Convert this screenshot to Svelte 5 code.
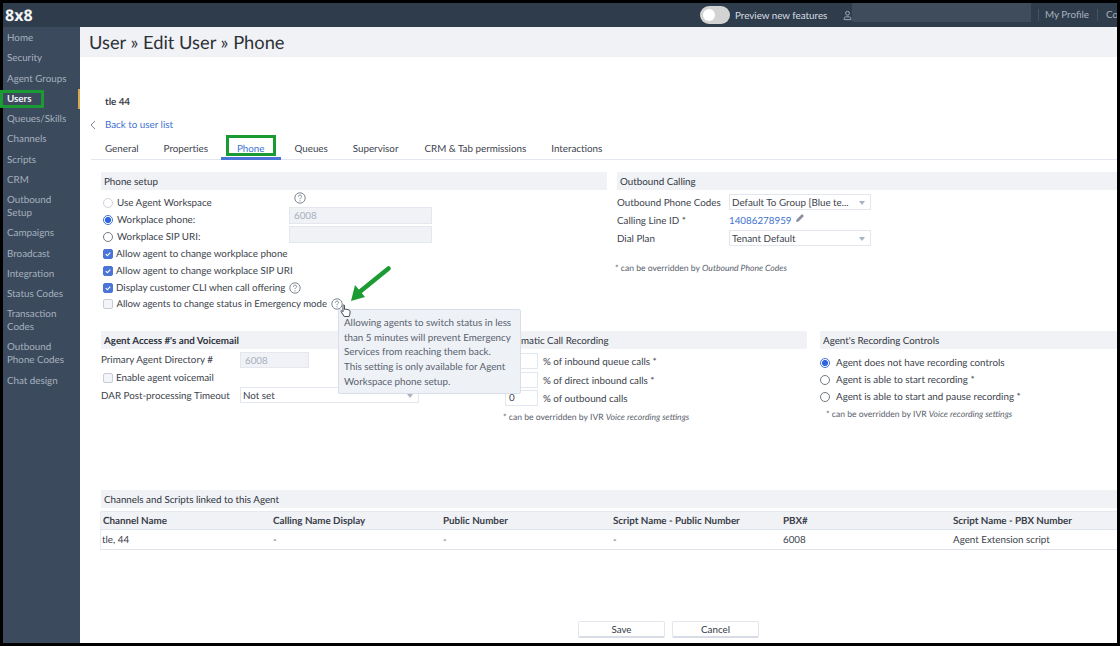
<script>
  const nav = [
    ['Home'], ['Security'], ['Agent Groups'], ['Users', true], ['Queues/Skills'], ['Channels'], ['Scripts'], ['CRM'],
    ['Outbound\nSetup'], ['Campaigns'], ['Broadcast'], ['Integration'], ['Status Codes'], ['Transaction\nCodes'],
    ['Outbound\nPhone Codes'], ['Chat design']
  ];
  const tabs = ['General', 'Properties', 'Phone', 'Queues', 'Supervisor', 'CRM & Tab permissions', 'Interactions'];
  const heads = ['Channel Name', 'Calling Name Display', 'Public Number', 'Script Name - Public Number', 'PBX#', 'Script Name - PBX Number'];
  const cells = ['tle, 44', '-', '-', '-', '6008', 'Agent Extension script'];
</script>

{#snippet help(cls)}
  <svg class="help {cls}" viewBox="0 0 12 12" aria-hidden="true">
    <circle cx="6" cy="6" r="5.2" fill="none" stroke="#7d8794" stroke-width="1"/>
    <path d="M4.4 4.7c0-1 .7-1.6 1.6-1.6s1.6.6 1.6 1.4c0 1.2-1.6 1.3-1.6 2.6" fill="none" stroke="#7d8794" stroke-width="1"/>
    <circle cx="6" cy="8.8" r=".65" fill="#7d8794"/>
  </svg>
{/snippet}

{#snippet check()}
  <span class="box on">
    <svg viewBox="0 0 10 10" aria-hidden="true"><path d="M2.2 5.2l2 2 3.6-4" fill="none" stroke="#fff" stroke-width="1.4"/></svg>
  </span>
{/snippet}

<div class="frame">
  <header class="top">
    <div class="logo">8x8</div>
    <div class="toggle"><span class="knob"></span></div>
    <span class="preview">Preview new features</span>
    <svg class="usericon" viewBox="0 0 12 14" aria-hidden="true">
      <circle cx="6" cy="4" r="2.6" fill="none" stroke="#c3cad3" stroke-width="1"/>
      <path d="M1.5 12.5v-1.5c0-1.4 1-2.2 2.2-2.2h4.6c1.2 0 2.2.8 2.2 2.2v1.5z" fill="none" stroke="#c3cad3" stroke-width="1"/>
    </svg>
    <div class="blur"></div>
    <a class="toplink first">My Profile</a>
    <a class="toplink">Co</a>
  </header>

  <div class="columns">
    <nav class="side">
      {#each nav as [label, active]}
        <div class="item" class:active>{label}</div>
      {/each}
    </nav>

    <main class="main">
      <h1 class="title">User » Edit User » Phone</h1>
      <div class="body">
        <div class="name">tle 44</div>
        <div class="back">
          <svg viewBox="0 0 6 10" aria-hidden="true"><path d="M5 1L1 5l4 4" fill="none" stroke="#7d8794" stroke-width="1"/></svg>
          <a>Back to user list</a>
        </div>
        <div class="tabs">
          {#each tabs as t}
            <div class="tab" class:current={t === 'Phone'}>{t}</div>
          {/each}
        </div>

        <div class="sections one">
          <section class="phone">
            <h2>Phone setup</h2>
            <div class="split">
              <div class="radios">
                <label class="row"><span class="radio off"></span>Use Agent Workspace</label>
                <label class="row"><span class="radio sel"></span>Workplace phone:</label>
                <label class="row"><span class="radio"></span>Workplace SIP URI:</label>
              </div>
              <div class="fields">
                {@render help('h1')}
                <div class="input dis">6008</div>
                <div class="input dis second"></div>
              </div>
            </div>
            <label class="row chk">{@render check()}Allow agent to change workplace phone</label>
            <label class="row chk">{@render check()}Allow agent to change workplace SIP URI</label>
            <label class="row chk">{@render check()}Display customer CLI when call offering {@render help('h2')}</label>
            <label class="row chk em"><span class="box"></span>Allow agents to change status in Emergency mode {@render help('h3')}</label>
          </section>
          <section class="outbound">
            <h2>Outbound Calling</h2>
            <div class="orow first"><span class="olabel">Outbound Phone Codes</span><div class="select w142">Default To Group [Blue te...<i></i></div></div>
            <div class="orow cli"><span class="olabel">Calling Line ID *</span><a>14086278959</a>
              <svg class="pencil" viewBox="0 0 10 10" aria-hidden="true"><path d="M1 9l.6-2.6L7 1l2 2-5.4 5.4z" fill="#8a929d"/></svg>
            </div>
            <div class="orow"><span class="olabel">Dial Plan</span><div class="select w142">Tenant Default<i></i></div></div>
            <p class="note onote">* can be overridden by <em>Outbound Phone Codes</em></p>
          </section>
        </div>

        <div class="sections two">
          <section class="access">
            <h2 class="strong">Agent Access #'s and Voicemail</h2>
            <div class="arow first"><span class="alabel">Primary Agent Directory #</span><div class="input dis w69">6008</div></div>
            <label class="row chk voice"><span class="box"></span>Enable agent voicemail</label>
            <div class="arow dar"><span class="alabel">DAR Post-processing Timeout</span><div class="select w179">Not set<i></i></div></div>
          </section>
          <section class="auto">
            <h2>Automatic Call Recording</h2>
            <div class="prow first"><div class="pct"></div>% of inbound queue calls *</div>
            <div class="prow"><div class="pct"></div>% of direct inbound calls *</div>
            <div class="prow"><div class="pct">0</div>% of outbound calls</div>
            <p class="note anote">* can be overridden by IVR <em>Voice recording settings</em></p>
          </section>
          <section class="controls">
            <h2>Agent's Recording Controls</h2>
            <label class="row rc first"><span class="radio sel"></span>Agent does not have recording controls</label>
            <label class="row rc"><span class="radio"></span>Agent is able to start recording *</label>
            <label class="row rc"><span class="radio"></span>Agent is able to start and pause recording *</label>
            <p class="note cnote">* can be overridden by IVR <em>Voice recording settings</em></p>
          </section>
        </div>

        <section class="linked">
          <h2>Channels and Scripts linked to this Agent</h2>
          <div class="table">
            <div class="tr th">{#each heads as h}<span>{h}</span>{/each}</div>
            <div class="tr td">{#each cells as c}<span>{c}</span>{/each}</div>
          </div>
        </section>

        <div class="actions">
          <button>Save</button>
          <button>Cancel</button>
        </div>
      </div>
    </main>
  </div>

  <div class="tip">Allowing agents to switch status in less<br/>than 5 minutes will prevent Emergency<br/>Services from reaching them back.<br/>This setting is only available for Agent<br/>Workspace phone setup.</div>
  <div class="mark users"></div>
  <div class="mark phonetab"></div>
  <svg class="arrow" viewBox="0 0 60 60" aria-hidden="true">
    <path d="M48.5 8.5L17 34" stroke="#1c9b33" stroke-width="4.6" stroke-linecap="round" fill="none"/>
    <path d="M11 41L15 25L25 37z" fill="#1c9b33"/>
  </svg>
  <svg class="hand" viewBox="0 0 12 15" aria-hidden="true">
    <path d="M3 1.5c0-.9 1.5-.9 1.5 0v4l1.2-.3 1.2.2 1.3.3 1.3.6c.6.4.6 1 .6 1.6 0 1.5-.3 3-1 4.6H4.2L1.2 7.8c-.5-.8.4-1.5 1.1-.9l.7.8z" fill="#fff" stroke="#333c48" stroke-width=".9" stroke-linejoin="round"/>
  </svg>
</div>

<style>
  :global(body) { margin: 0; background: #000; }
  .frame {
    position: relative; box-sizing: border-box; width: 1120px; height: 646px; padding: 3px; background: #000;
    display: flex; flex-direction: column; overflow: hidden; text-rendering: geometricPrecision;
    font-family: "Lato", "Noto Sans", sans-serif; font-size: 9.8px; color: #3c434d;
  }
  .top { height: 24px; flex: none; background: #2f3c4c; display: flex; align-items: center; overflow: hidden; }
  .logo { width: 695px; padding-left: 2px; box-sizing: border-box; flex: none; color: #f4f5f7; font: 700 16px/24px "Open Sans", sans-serif; }
  .toggle { width: 30px; height: 18px; border-radius: 9px; background: #d3d3d3; position: relative; margin-left: 2px; flex: none; }
  .knob { position: absolute; left: 3px; top: 3px; width: 12px; height: 12px; border-radius: 50%; background: #fff; }
  .preview { margin: 2px 0 0 5px; color: #d7dce2; width: 108px; flex: none; }
  .usericon { width: 9px; height: 13px; flex: none; }
  .blur { width: 179px; height: 19px; margin-top: -5px; background: #3f4c5c; flex: none; }
  .toplink { color: #aab3be; padding: 0 8px; height: 12px; line-height: 13px; border-left: 1px solid #45525f; flex: none; white-space: nowrap; }
  .toplink.first { margin-left: 7px; padding-left: 6px; width: 45px; padding-right: 7px; }
  .columns { flex: 1; display: flex; min-height: 0; }
  .side { width: 77px; flex: none; background: #3b4a5d; padding-top: 1px; box-sizing: border-box; }
  .item { padding: 4.2px 0 3.05px 4px; line-height: 13px; color: #a7b1bf; white-space: pre; }
  .item.active { color: #f0f2f5; font-weight: 700; box-shadow: inset -2px 0 #d9a94f; }
  .main { flex: 1; min-width: 0; background: #fff; display: flex; flex-direction: column; overflow: hidden; }
  .title { margin: 0; height: 30px; flex: none; background: #f1f2f6; padding-left: 9px; font: 400 18.3px/30px "Lato", sans-serif; color: #2c3138; }
  .body { padding-left: 21px; flex: 1; min-height: 0; display: flex; flex-direction: column; }
  .name { margin-top: 38px; padding-left: 4px; line-height: 14px; font-weight: 700; color: #3c434d; }
  .back { margin-top: 9px; margin-left: -11px; display: flex; align-items: center; line-height: 14px; gap: 9px; }
  .back svg { width: 6px; height: 10px; }
  .back a { color: #3f72d0; }
  .tabs { margin: 6px 0 0 -10px; display: flex; border-bottom: 1px solid #e2e6ee; height: 21px; padding-left: 14px; }
  .tab { position: relative; box-sizing: border-box; height: 21px; padding-top: 2px; line-height: 19px; color: #3c434d; }
  .tab:nth-child(1) { margin-right: 25px; }
  .tab:nth-child(2) { margin-right: 29px; }
  .tab:nth-child(3) { margin-right: 30px; }
  .tab:nth-child(4) { margin-right: 25px; }
  .tab:nth-child(5) { margin-right: 26px; }
  .tab:nth-child(6) { margin-right: 25px; }
  .tab.current { color: #3f72d0; }
  .tab.current::after { content: ""; position: absolute; left: -16px; right: -16px; bottom: -1px; height: 3px; background: #4a74d6; }
  .sections { display: flex; flex: none; }
  .one { margin-top: 12px; height: 159px; gap: 10px; }
  .two { height: 159px; }
  h2 { margin: 0; box-sizing: border-box; height: 18px; background: #f1f2f6; padding: 2px 0 0 3px; font-size: 9.8px; font-weight: 400; line-height: 16px; color: #2f353d; }
  h2.strong { font-weight: 700; }
  .phone { width: 506px; flex: none; }
  .outbound { flex: 1; }
  .split { display: flex; padding-top: 4px; }
  .radios { width: 188px; flex: none; }
  .fields { flex: 1; display: flex; flex-direction: column; align-items: flex-start; margin-top: -1px; }
  .row { display: flex; align-items: center; box-sizing: border-box; height: 17px; padding-top: 2px; line-height: 15px; white-space: nowrap; }
  .radio { width: 10px; height: 10px; box-sizing: border-box; margin: -2px 4px 0 2px; border: 1px solid #707a86; border-radius: 50%; background: #fff; flex: none; }
  .radio.off { border-color: #ccd1d8; }
  .radio.sel { border: 1px solid #3f72d8; background: radial-gradient(circle, #2f66e0 0 2.8px, #fff 3.2px); }
  .box { width: 10px; height: 10px; box-sizing: border-box; border: 1px solid #c7cdd8; border-radius: 2px; background: #f4f5f8; margin: -2px 3px 0 0; flex: none; display: flex; }
  .box.on { background: #4a74d6; border-color: #4a74d6; }
  .box svg { width: 100%; height: 100%; }
  .chk { padding-left: 2px; }
  .em { font-size: 9.6px; margin-top: -1px; }
  .em .box { margin-right: 3.5px; }
  .help { width: 12px; height: 12px; flex: none; }
  .h1 { margin: -1px 0 0 5px; }
  .h2 { margin: -2px 0 0 4px; }
  .h3 { margin: -2px 0 0 4px; }
  .input { box-sizing: border-box; height: 17px; line-height: 17px; padding-left: 4px; border: 1px solid #e4e7ee; background: #fff; }
  .input.dis { background: #f0f2f6; color: #a7b0be; width: 143px; margin-top: 3px; }
  .input.second { margin-top: 2px; }
  .input.w69 { width: 69px; margin-top: 0; height: 16px; line-height: 16px; }
  .orow { display: flex; align-items: center; height: 18px; }
  .orow.first { margin-top: 3px; }
  .olabel { width: 112px; flex: none; white-space: nowrap; margin-top: 2px; }
  .orow a { color: #3f72d0; margin-top: 2px; }
  .pencil { width: 10px; height: 10px; margin: -4px 0 0 3px; }
  .select { position: relative; box-sizing: border-box; height: 16px; line-height: 16px; padding-left: 2px; border: 1px solid #e2e6ee; background: #fff; white-space: nowrap; }
  .select i { position: absolute; right: 5px; top: 6px; width: 0; height: 0; border: 3.5px solid transparent; border-top: 4px solid #a9b2c0; border-bottom: 0; }
  .w142 { width: 142px; }
  .w179 { width: 179px; }
  .note { margin: 0; font-size: 8.6px; line-height: 12px; color: #59616c; white-space: nowrap; }
  .onote { margin-top: 15px; margin-left: -2px; }
  .access { width: 396px; flex: none; }
  .auto { width: 310px; flex: none; }
  .controls { flex: 1; margin-left: 13px; }
  .arow { display: flex; align-items: center; }
  .arow.first { margin-top: 2px; height: 17px; }
  .alabel { width: 139px; flex: none; white-space: nowrap; margin-top: 1px; }
  .voice { margin-top: 1px; }
  .dar { height: 18px; }
  .prow { display: flex; align-items: center; box-sizing: border-box; height: 18.5px; padding: 2px 0 0 8px; white-space: nowrap; }
  .prow.first { margin-top: 3px; }
  .pct { box-sizing: border-box; width: 33px; height: 16px; margin: -2px 5px 0 0; padding-left: 3px; line-height: 15px; border: 1px solid #e2e6ee; background: #fff; flex: none; }
  .anote { margin-top: 3.5px; margin-left: 6px; }
  .rc.first { margin-top: 5px; }
  .rc .radio { margin: -2px 6px 0 0; }
  .cnote { margin-top: 3px; margin-left: 6px; }
  .linked { flex: none; }
  .table { margin-top: 3px; border-bottom: 1px solid #dfe4ec; box-shadow: -1px 0 #e9ecf2; }
  .tr { display: grid; grid-template-columns: repeat(5, 170px) 1fr; height: 19px; align-items: center; box-sizing: border-box; }
  .tr span { padding-left: 2px; white-space: nowrap; }
  .th { background: #f1f2f6; font-weight: 700; border-bottom: 1px solid #dfe4ec; border-top: 1px solid #e6e9ef; color: #3a4049; }
  .td { color: #3c434d; }
  .td span:first-child { padding-left: 1px; }
  .actions { margin: 71px 0 0 477px; display: flex; gap: 7px; }
  button { width: 85px; height: 14px; box-sizing: content-box; padding: 0; background: #fff; border: 1px solid #e3e6ec; border-bottom: 2px solid #d7dce5; border-radius: 2px; font: 9.8px "Lato", sans-serif; color: #333a43; }
  .tip { position: absolute; left: 338px; top: 309px; width: 183px; height: 85px; box-sizing: border-box; padding: 6px 2px 0 5px; background: #eef1f6; border: 1px solid #d9dee8; border-radius: 2px; line-height: 14.7px; color: #59616e; white-space: nowrap; }
  .mark { position: absolute; box-sizing: border-box; border: 3px solid #1a9a32; }
  .users { left: 0; top: 90px; width: 44px; height: 18px; }
  .phonetab { left: 226px; top: 135px; width: 50px; height: 21px; }
  .arrow { position: absolute; left: 340px; top: 260px; width: 60px; height: 60px; }
  .hand { position: absolute; left: 340px; top: 304px; width: 12px; height: 15px; }
</style>
